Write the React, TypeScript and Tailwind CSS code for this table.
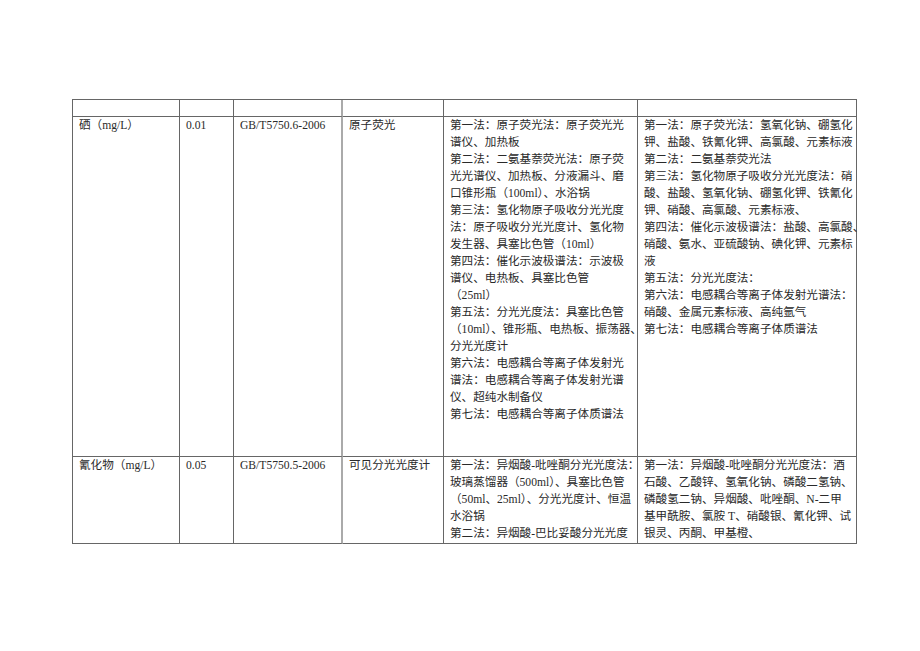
const rows = [
  {
    item: "硒（mg/L）",
    limit: "0.01",
    std: "GB/T5750.6-2006",
    method: "原子荧光",
    equipment: [
      "第一法：原子荧光法：原子荧光光",
      "谱仪、加热板",
      "第二法：二氨基萘荧光法：原子荧",
      "光光谱仪、加热板、分液漏斗、磨",
      "口锥形瓶（100ml）、水浴锅",
      "第三法：氢化物原子吸收分光光度",
      "法：原子吸收分光光度计、氢化物",
      "发生器、具塞比色管（10ml）",
      "第四法：催化示波极谱法：示波极",
      "谱仪、电热板、具塞比色管",
      "（25ml）",
      "第五法：分光光度法：具塞比色管",
      "（10ml）、锥形瓶、电热板、振荡器、",
      "分光光度计",
      "第六法：电感耦合等离子体发射光",
      "谱法：电感耦合等离子体发射光谱",
      "仪、超纯水制备仪",
      "第七法：电感耦合等离子体质谱法",
    ],
    reagents: [
      "第一法：原子荧光法：氢氧化钠、硼氢化",
      "钾、盐酸、铁氰化钾、高氯酸、元素标液",
      "第二法：二氨基萘荧光法",
      "第三法：氢化物原子吸收分光光度法：硝",
      "酸、盐酸、氢氧化钠、硼氢化钾、铁氰化",
      "钾、硝酸、高氯酸、元素标液、",
      "第四法：催化示波极谱法：盐酸、高氯酸、",
      "硝酸、氨水、亚硫酸钠、碘化钾、元素标",
      "液",
      "第五法：分光光度法：",
      "第六法：电感耦合等离子体发射光谱法：",
      "硝酸、金属元素标液、高纯氩气",
      "第七法：电感耦合等离子体质谱法",
    ],
    height: "h-[340px]",
  },
  {
    item: "氰化物（mg/L）",
    limit: "0.05",
    std: "GB/T5750.5-2006",
    method: "可见分光光度计",
    equipment: [
      "第一法：异烟酸-吡唑酮分光光度法：",
      "玻璃蒸馏器（500ml）、具塞比色管",
      "（50ml、25ml）、分光光度计、恒温",
      "水浴锅",
      "第二法：异烟酸-巴比妥酸分光光度",
    ],
    reagents: [
      "第一法：异烟酸-吡唑酮分光光度法：酒",
      "石酸、乙酸锌、氢氧化钠、磷酸二氢钠、",
      "磷酸氢二钠、异烟酸、吡唑酮、N-二甲",
      "基甲酰胺、氯胺 T、硝酸银、氰化钾、试",
      "银灵、丙酮、甲基橙、",
    ],
    height: "h-[87px]",
  },
];

const cols = "grid grid-cols-[107px_54px_109px_101px_194px_219px]";
const cell = "border-b border-r border-[#666] pl-[6px] min-w-0";

function Lines({ lines }: { lines: string[] }) {
  return (
    <>
      {lines.map((l, i) => (
        <div key={i} className="whitespace-nowrap">
          {l}
        </div>
      ))}
    </>
  );
}

export default function App() {
  return (
    <div className="min-h-[651px] w-[920px] bg-white pl-[72px] pt-[99px]">
      <div
        className="w-[785px] border-l border-t border-[#666] text-[11.6px] leading-[17px] text-[#2a2a2a]"
        style={{ fontFamily: '"Liberation Serif", "Noto Sans CJK SC", serif' }}
      >
        {/* empty header row */}
        <div className={`${cols} h-[17px]`}>
          <div className={cell} />
          <div className={cell} />
          <div className={`${cell} border-r-2 border-r-[#aaa]`} />
          <div className={cell} />
          <div className={cell} />
          <div className={cell} />
        </div>

        {rows.map((r) => (
          <div key={r.item} className={`${cols} ${r.height}`}>
            <div className={cell}>{r.item}</div>
            <div className={cell}>{r.limit}</div>
            <div className={`${cell} border-r-2 border-r-[#aaa]`}>{r.std}</div>
            <div className={cell}>{r.method}</div>
            <div className={cell}>
              <Lines lines={r.equipment} />
            </div>
            <div className={cell}>
              <Lines lines={r.reagents} />
            </div>
          </div>
        ))}
      </div>
    </div>
  );
}
